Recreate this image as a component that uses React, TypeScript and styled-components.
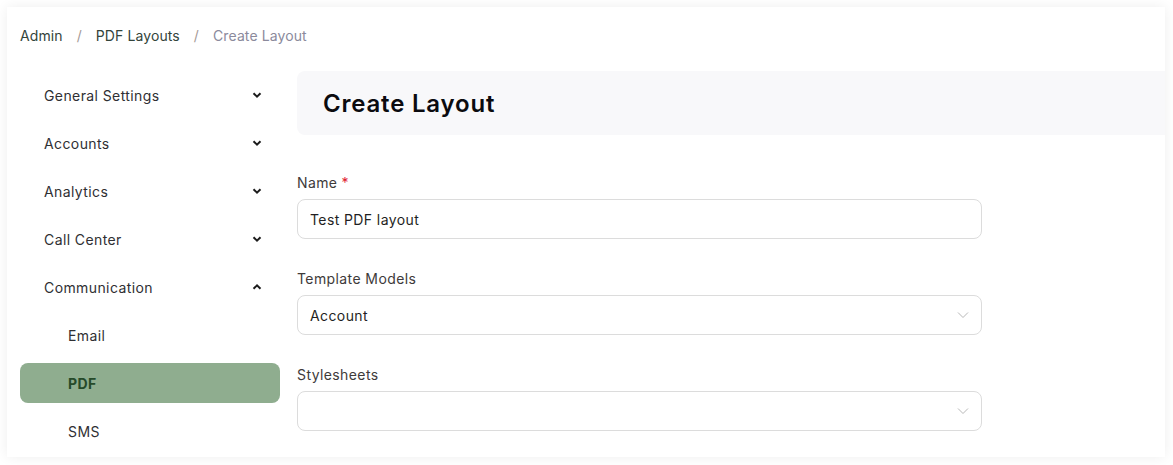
import React from "react";
import styled, { createGlobalStyle } from "styled-components";

const Global = createGlobalStyle`
  html, body { margin: 0; padding: 0; background: #ffffff; }
  body { font-family: Inter, "Open Sans", sans-serif; color: #333; letter-spacing: 0.4px; }
  * { box-sizing: border-box; }
`;

const Page = styled.div`
  padding: 7px 8px 8px 7px;
`;

const Card = styled.div`
  background: #fff;
  height: 450px;
  box-shadow: 0 0 12px rgba(0, 0, 0, 0.07);
  overflow: hidden;
  display: flex;
  flex-direction: column;
`;

const Breadcrumb = styled.nav`
  display: flex;
  align-items: center;
  height: 56px;
  padding: 0 0 0 13px;
  font-size: 14px;
  letter-spacing: 0.1px;
  gap: 14px;
`;

const Crumb = styled.span<{ $current?: boolean }>`
  color: ${(p) => (p.$current ? "#8b8a9c" : "#33443b")};
`;

const Sep = styled.span`
  color: #a59a96;
`;

const Body = styled.div`
  display: flex;
  gap: 17px;
  padding: 8px 0 0 13px;
`;

const Sidebar = styled.ul`
  list-style: none;
  margin: 0;
  padding: 4px 0 0;
  width: 260px;
  display: flex;
  flex-direction: column;
  gap: 8px;
`;

const NavItem = styled.li<{ $sub?: boolean; $active?: boolean }>`
  height: 40px;
  display: flex;
  align-items: center;
  justify-content: space-between;
  padding: 0 18px 0 ${(p) => (p.$sub ? 48 : 24)}px;
  border-radius: 8px;
  font-size: 14px;
  background: ${(p) => (p.$active ? "#8fad8f" : "transparent")};
  color: ${(p) => (p.$active ? "#264a2a" : "#2f2f33")};
  font-weight: ${(p) => (p.$active ? 700 : 400)};
`;

const Main = styled.div`
  flex: 1;
  display: flex;
  flex-direction: column;
`;

const Header = styled.div`
  height: 64px;
  background: #f8f8fa;
  border-radius: 8px 0 0 8px;
  display: flex;
  align-items: center;
  padding-left: 26px;
`;

const Title = styled.h1`
  margin: 0;
  font-size: 24px;
  font-weight: 600;
  letter-spacing: 0.8px;
  color: #0b0b0f;
`;

const Form = styled.div`
  width: 685px;
  padding-top: 38px;
  display: flex;
  flex-direction: column;
  gap: 30px;
`;

const Field = styled.div`
  display: flex;
  flex-direction: column;
  gap: 6px;
`;

const Label = styled.label`
  font-size: 14px;
  color: #3e3a3a;
  line-height: 20px;
`;

const Req = styled.span`
  color: #e0202c;
  margin-left: 4px;
`;

const Box = styled.div`
  height: 40px;
  border: 1px solid #dcdcdc;
  border-radius: 8px;
  display: flex;
  align-items: center;
  justify-content: space-between;
  padding: 0 12px;
  font-size: 14px;
  color: #1f1f23;
`;

const Chevron = ({ up }: { up?: boolean }) => (
  <svg width="10" height="8" viewBox="0 0 10 8">
    <path
      d={up ? "M1.5 5.8 L5 2.3 L8.5 5.8" : "M1.5 2.2 L5 5.7 L8.5 2.2"}
      fill="none"
      stroke="#1c1c1c"
      strokeWidth="2"
    />
  </svg>
);

const ThinChevron = () => (
  <svg width="12" height="8" viewBox="0 0 12 8">
    <path d="M1 1.5 L6 6.5 L11 1.5" fill="none" stroke="#b8b8b8" strokeWidth="1" />
  </svg>
);

const nav = [
  { label: "General Settings", chev: "down" },
  { label: "Accounts", chev: "down" },
  { label: "Analytics", chev: "down" },
  { label: "Call Center", chev: "down" },
  { label: "Communication", chev: "up" },
  { label: "Email", sub: true },
  { label: "PDF", sub: true, active: true },
  { label: "SMS", sub: true },
];

export default function App() {
  return (
    <>
      <Global />
      <Page>
        <Card>
          <Breadcrumb>
            <Crumb>Admin</Crumb>
            <Sep>/</Sep>
            <Crumb>PDF Layouts</Crumb>
            <Sep>/</Sep>
            <Crumb $current>Create Layout</Crumb>
          </Breadcrumb>
          <Body>
            <Sidebar>
              {nav.map((n) => (
                <NavItem key={n.label} $sub={n.sub} $active={n.active}>
                  <span>{n.label}</span>
                  {n.chev && <Chevron up={n.chev === "up"} />}
                </NavItem>
              ))}
            </Sidebar>
            <Main>
              <Header>
                <Title>Create Layout</Title>
              </Header>
              <Form>
                <Field>
                  <Label>
                    Name<Req>*</Req>
                  </Label>
                  <Box>Test PDF layout</Box>
                </Field>
                <Field>
                  <Label>Template Models</Label>
                  <Box>
                    <span>Account</span>
                    <ThinChevron />
                  </Box>
                </Field>
                <Field>
                  <Label>Stylesheets</Label>
                  <Box>
                    <span />
                    <ThinChevron />
                  </Box>
                </Field>
              </Form>
            </Main>
          </Body>
        </Card>
      </Page>
    </>
  );
}
